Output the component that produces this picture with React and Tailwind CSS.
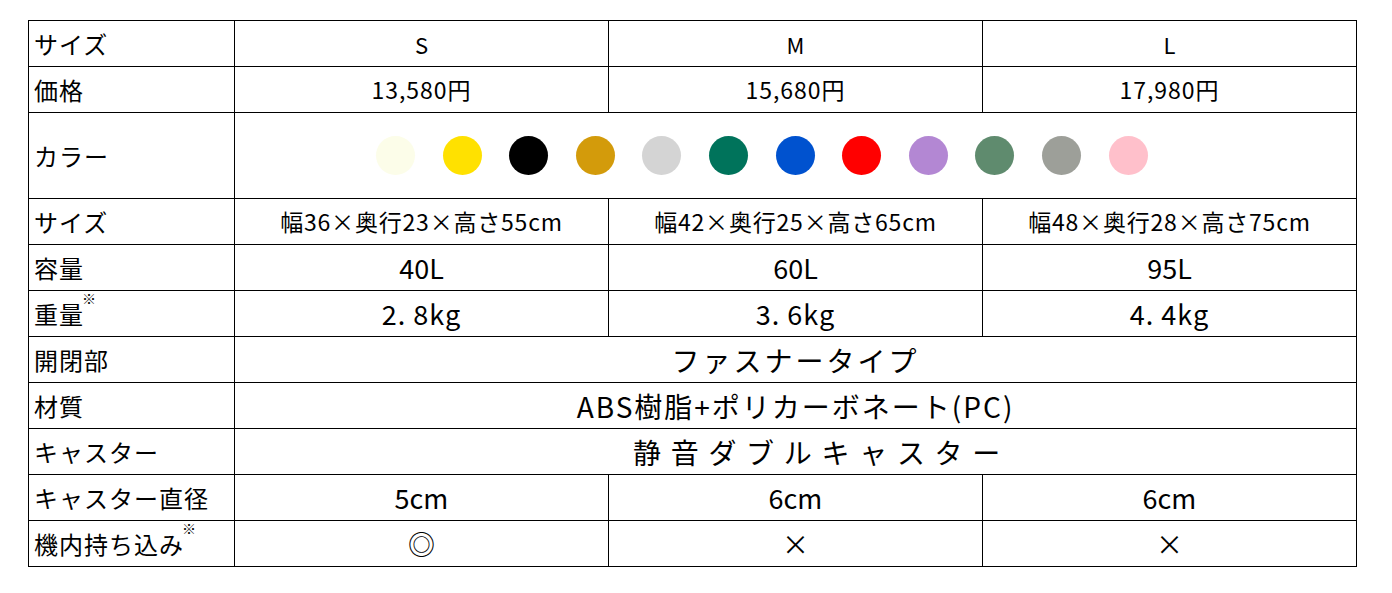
import React from "react";

const colors = [
  "#fcfde9",
  "#ffe100",
  "#000000",
  "#d39b0b",
  "#d4d4d4",
  "#00735b",
  "#0052cf",
  "#ff0000",
  "#b387d3",
  "#5f8b6e",
  "#9d9f99",
  "#ffc0cb",
];

const Label = ({ children, mark }) => (
  <td className="border border-black pl-[5px] text-left text-[24px] leading-none tracking-[1px] whitespace-nowrap">
    {children}
    {mark && <sup className="text-[14px] align-top relative -top-[4px] -ml-[2px]">※</sup>}
  </td>
);

const Cell = ({ children, className = "", colSpan }) => (
  <td colSpan={colSpan} className={`border border-black text-center leading-none whitespace-nowrap ${className}`}>
    {children}
  </td>
);

const App = () => {
  return (
    <div
      className="min-h-screen bg-white pt-[20px] pl-[28px] text-black"
      style={{ fontFamily: '"Noto Sans CJK JP", "Noto Sans", sans-serif' }}
    >
      <table className="border-collapse table-fixed w-[1329px]">
        <colgroup>
          <col className="w-[206px]" />
          <col className="w-[374px]" />
          <col className="w-[374px]" />
          <col className="w-[374px]" />
        </colgroup>
        <tbody>
          <tr className="h-[46px]">
            <Label>サイズ</Label>
            <Cell className="text-[22px]">S</Cell>
            <Cell className="text-[22px]">M</Cell>
            <Cell className="text-[22px]">L</Cell>
          </tr>
          <tr className="h-[46px]">
            <Label>価格</Label>
            <Cell className="text-[23px] tracking-[1px]">13,580円</Cell>
            <Cell className="text-[23px] tracking-[1px]">15,680円</Cell>
            <Cell className="text-[23px] tracking-[1px]">17,980円</Cell>
          </tr>
          <tr className="h-[86px]">
            <Label>カラー</Label>
            <td colSpan={3} className="border border-black">
              <div className="flex items-center gap-[27.6px] pl-[141px]">
                {colors.map((c) => (
                  <span
                    key={c}
                    className="block w-[39px] h-[39px] rounded-full shrink-0"
                    style={{ backgroundColor: c }}
                  />
                ))}
              </div>
            </td>
          </tr>
          <tr className="h-[46px]">
            <Label>サイズ</Label>
            <Cell className="text-[23px] tracking-[0.8px]">幅36×奥行23×高さ55cm</Cell>
            <Cell className="text-[23px] tracking-[0.8px]">幅42×奥行25×高さ65cm</Cell>
            <Cell className="text-[23px] tracking-[0.8px]">幅48×奥行28×高さ75cm</Cell>
          </tr>
          <tr className="h-[46px]">
            <Label>容量</Label>
            <Cell className="text-[27px]">40L</Cell>
            <Cell className="text-[27px]">60L</Cell>
            <Cell className="text-[27px]">95L</Cell>
          </tr>
          <tr className="h-[46px]">
            <Label mark>重量</Label>
            <Cell className="text-[27px] tracking-[1px]">2. 8kg</Cell>
            <Cell className="text-[27px] tracking-[1px]">3. 6kg</Cell>
            <Cell className="text-[27px] tracking-[1px]">4. 4kg</Cell>
          </tr>
          <tr className="h-[46px]">
            <Label>開閉部</Label>
            <Cell className="text-[28px] tracking-[3px]" colSpan={3}>
              ファスナータイプ
            </Cell>
          </tr>
          <tr className="h-[46px]">
            <Label>材質</Label>
            <Cell className="text-[28px] tracking-[2px]" colSpan={3}>
              ABS樹脂+ポリカーボネート(PC)
            </Cell>
          </tr>
          <tr className="h-[46px]">
            <Label>キャスター</Label>
            <Cell className="text-[28px] tracking-[9.7px] pl-[52px]" colSpan={3}>
              静音ダブルキャスター
            </Cell>
          </tr>
          <tr className="h-[46px]">
            <Label>キャスター直径</Label>
            <Cell className="text-[27px]">5cm</Cell>
            <Cell className="text-[27px]">6cm</Cell>
            <Cell className="text-[27px]">6cm</Cell>
          </tr>
          <tr className="h-[46px]">
            <Label mark>機内持ち込み</Label>
            <Cell className="text-[27px]">◎</Cell>
            <Cell className="text-[27px]">×</Cell>
            <Cell className="text-[27px]">×</Cell>
          </tr>
        </tbody>
      </table>
    </div>
  );
};

export default App;
